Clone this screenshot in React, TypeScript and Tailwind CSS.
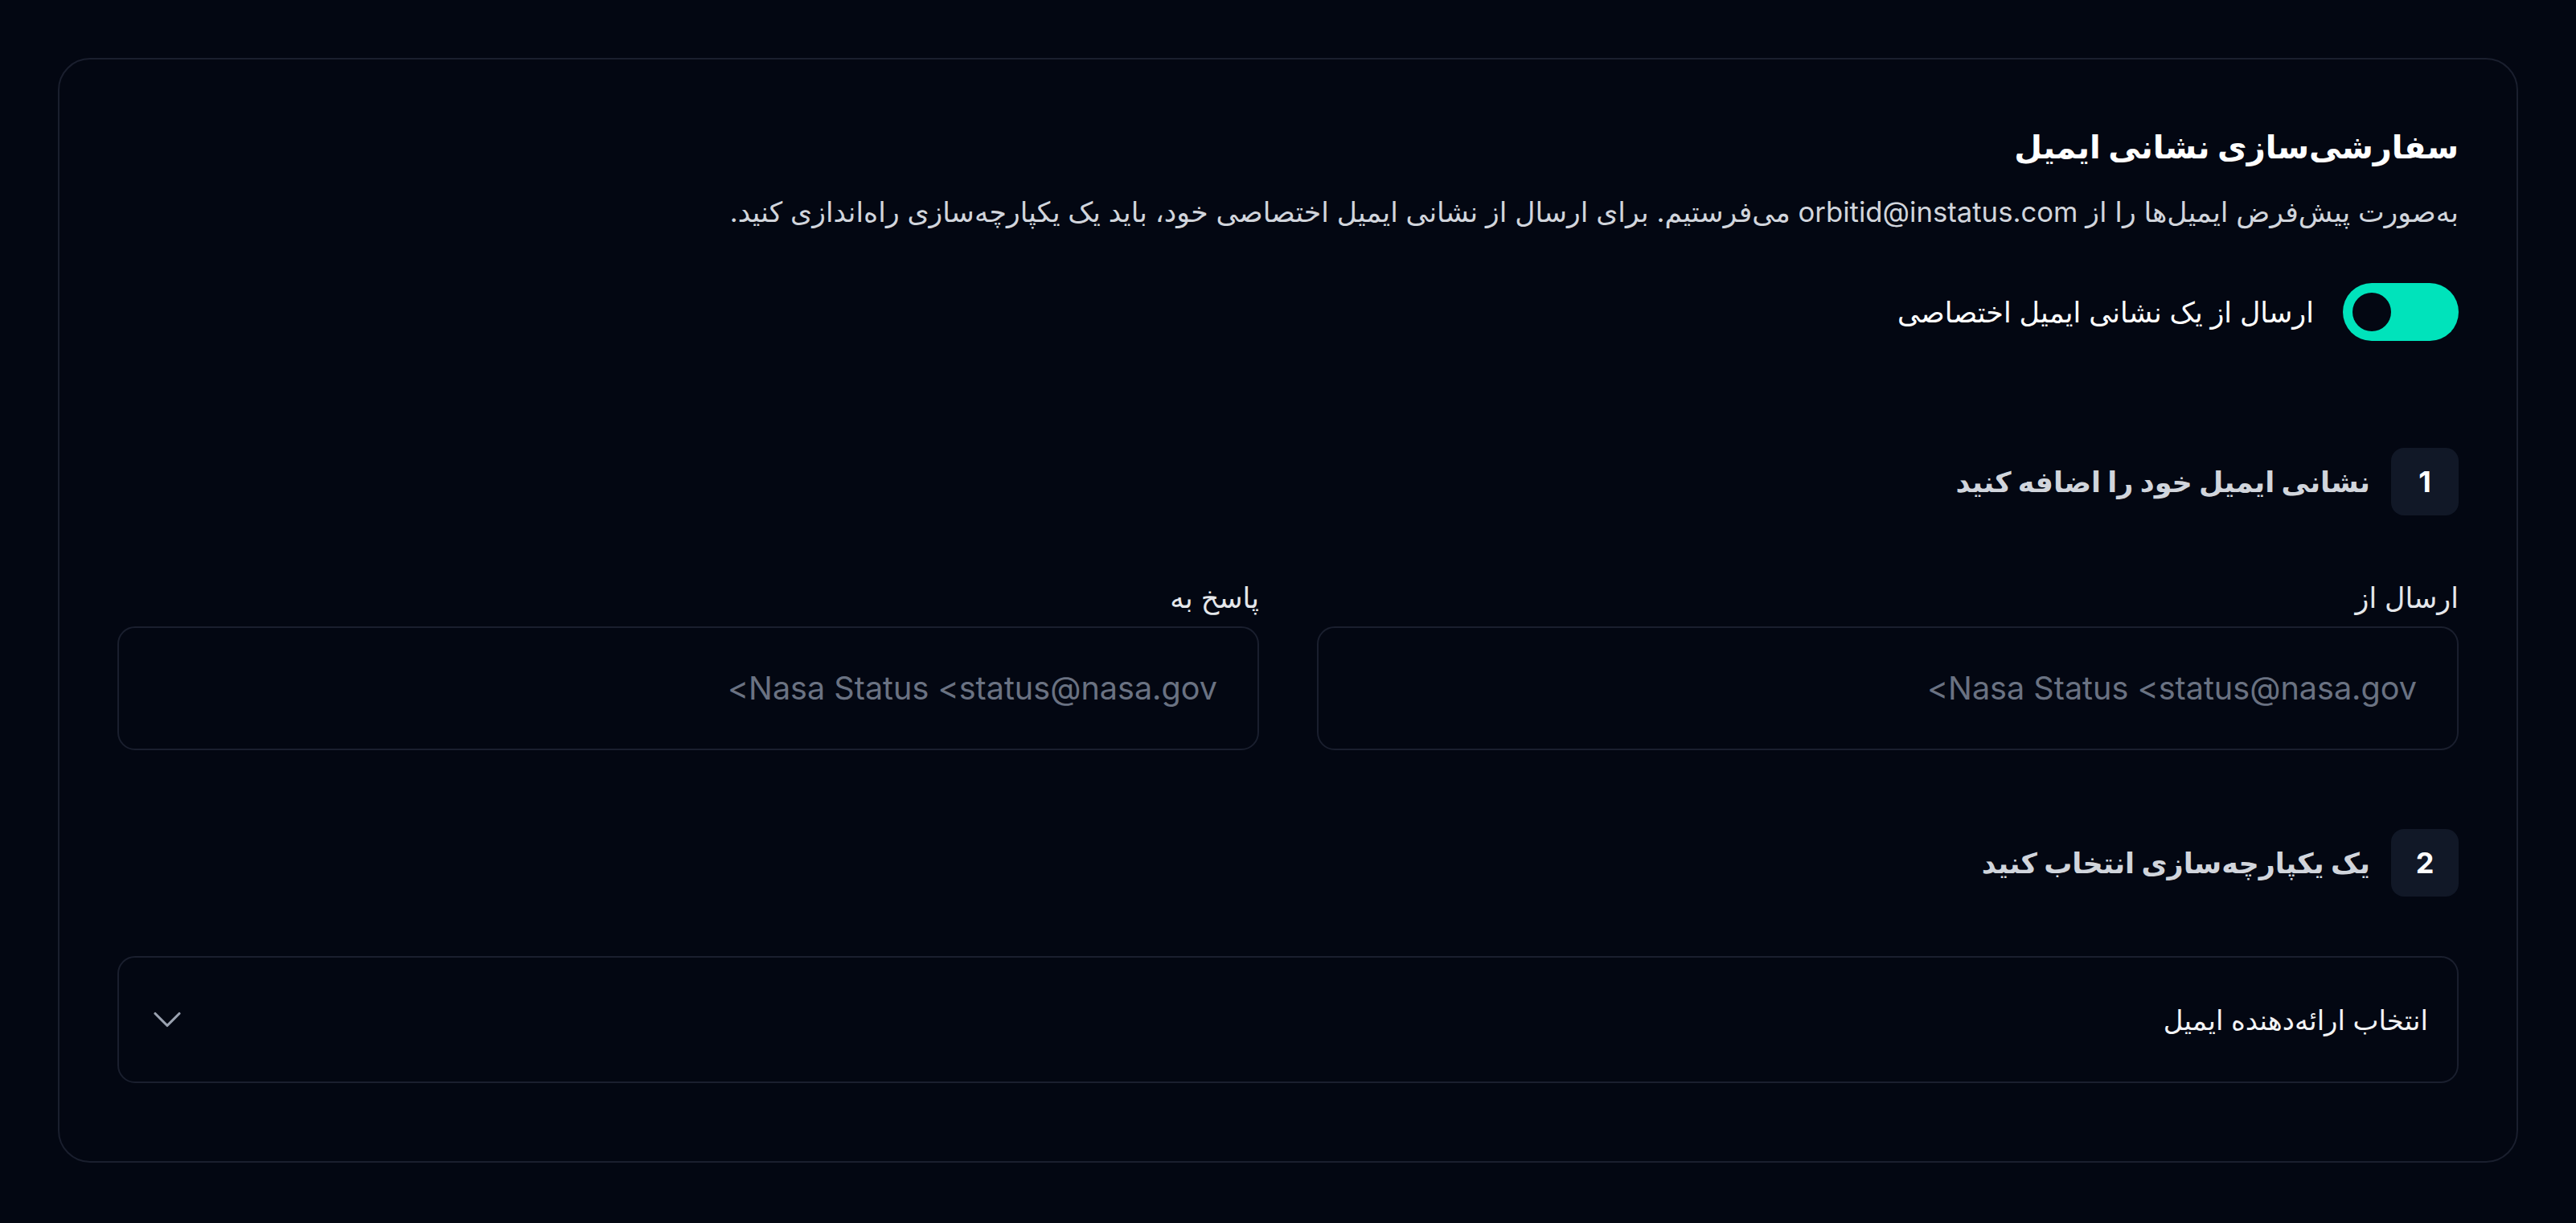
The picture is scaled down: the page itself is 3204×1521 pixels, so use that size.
import { ChevronDown } from "lucide-react";

const StepHeading = ({ num, title }: { num: number; title: string }) => (
  <div className="flex items-center gap-[26px]">
    <div className="flex h-[84px] w-[84px] items-center justify-center rounded-[16px] bg-[#111827] text-[36px] font-bold text-white">
      {num}
    </div>
    <h3 className="text-[35px] font-bold leading-[48px] text-gray-300">{title}</h3>
  </div>
);

const EmailField = ({ label }: { label: string }) => (
  <div className="flex flex-col gap-[16px]">
    <label className="text-[35px] leading-[40px] text-gray-200">{label}</label>
    <input
      dir="rtl"
      placeholder="Nasa Status <status@nasa.gov>"
      className="h-[154px] w-full rounded-[22px] border-2 border-[#1a1f2e] bg-transparent px-[50px] text-[39.6px] text-gray-200 outline-none placeholder:text-gray-500"
    />
  </div>
);

export default function App() {
  return (
    <div
      className="min-h-screen bg-[#030712] p-[72px]"
      style={{ fontFamily: 'Inter, "DejaVu Sans", sans-serif' }}
    >
      <div
        dir="rtl"
        className="rounded-[40px] border-2 border-[#1a1f2e] px-[72px] pt-[85px] pb-[97px]"
      >
        <h2 className="text-[40px] font-bold leading-[48px] text-white">
          سفارشی‌سازی نشانی ایمیل
        </h2>
        <p className="mt-[32px] text-[34.7px] leading-[48px] text-gray-300">
          به‌صورت پیش‌فرض ایمیل‌ها را از orbitid@instatus.com می‌فرستیم. برای ارسال از نشانی
          ایمیل اختصاصی خود، باید یک یکپارچه‌سازی راه‌اندازی کنید.
        </p>

        <div className="mt-[65px] flex items-center gap-[36px]">
          <button className="flex h-[72px] w-[144px] items-center justify-end rounded-full bg-[#00e3bb] px-[12px]">
            <span className="h-[48px] w-[48px] rounded-full bg-[#030712]" />
          </button>
          <span className="text-[35px] text-white">ارسال از یک نشانی ایمیل اختصاصی</span>
        </div>

        <div className="mt-[133px]">
          <StepHeading num={1} title="نشانی ایمیل خود را  اضافه کنید" />
        </div>

        <div className="mt-[82px] grid grid-cols-2 gap-[72px]">
          <EmailField label="ارسال از" />
          <EmailField label="پاسخ به" />
        </div>

        <div className="mt-[98px]">
          <StepHeading num={2} title="یک یکپارچه‌سازی انتخاب کنید" />
        </div>

        <button className="mt-[74px] flex h-[158px] w-full items-center justify-between rounded-[22px] border-2 border-[#1a1f2e] pr-[36px] pl-[30px]">
          <span className="text-[34px] text-gray-100">انتخاب ارائه‌دهنده ایمیل</span>
          <ChevronDown size={60} strokeWidth={1.25} className="text-gray-400" />
        </button>
      </div>
    </div>
  );
}
